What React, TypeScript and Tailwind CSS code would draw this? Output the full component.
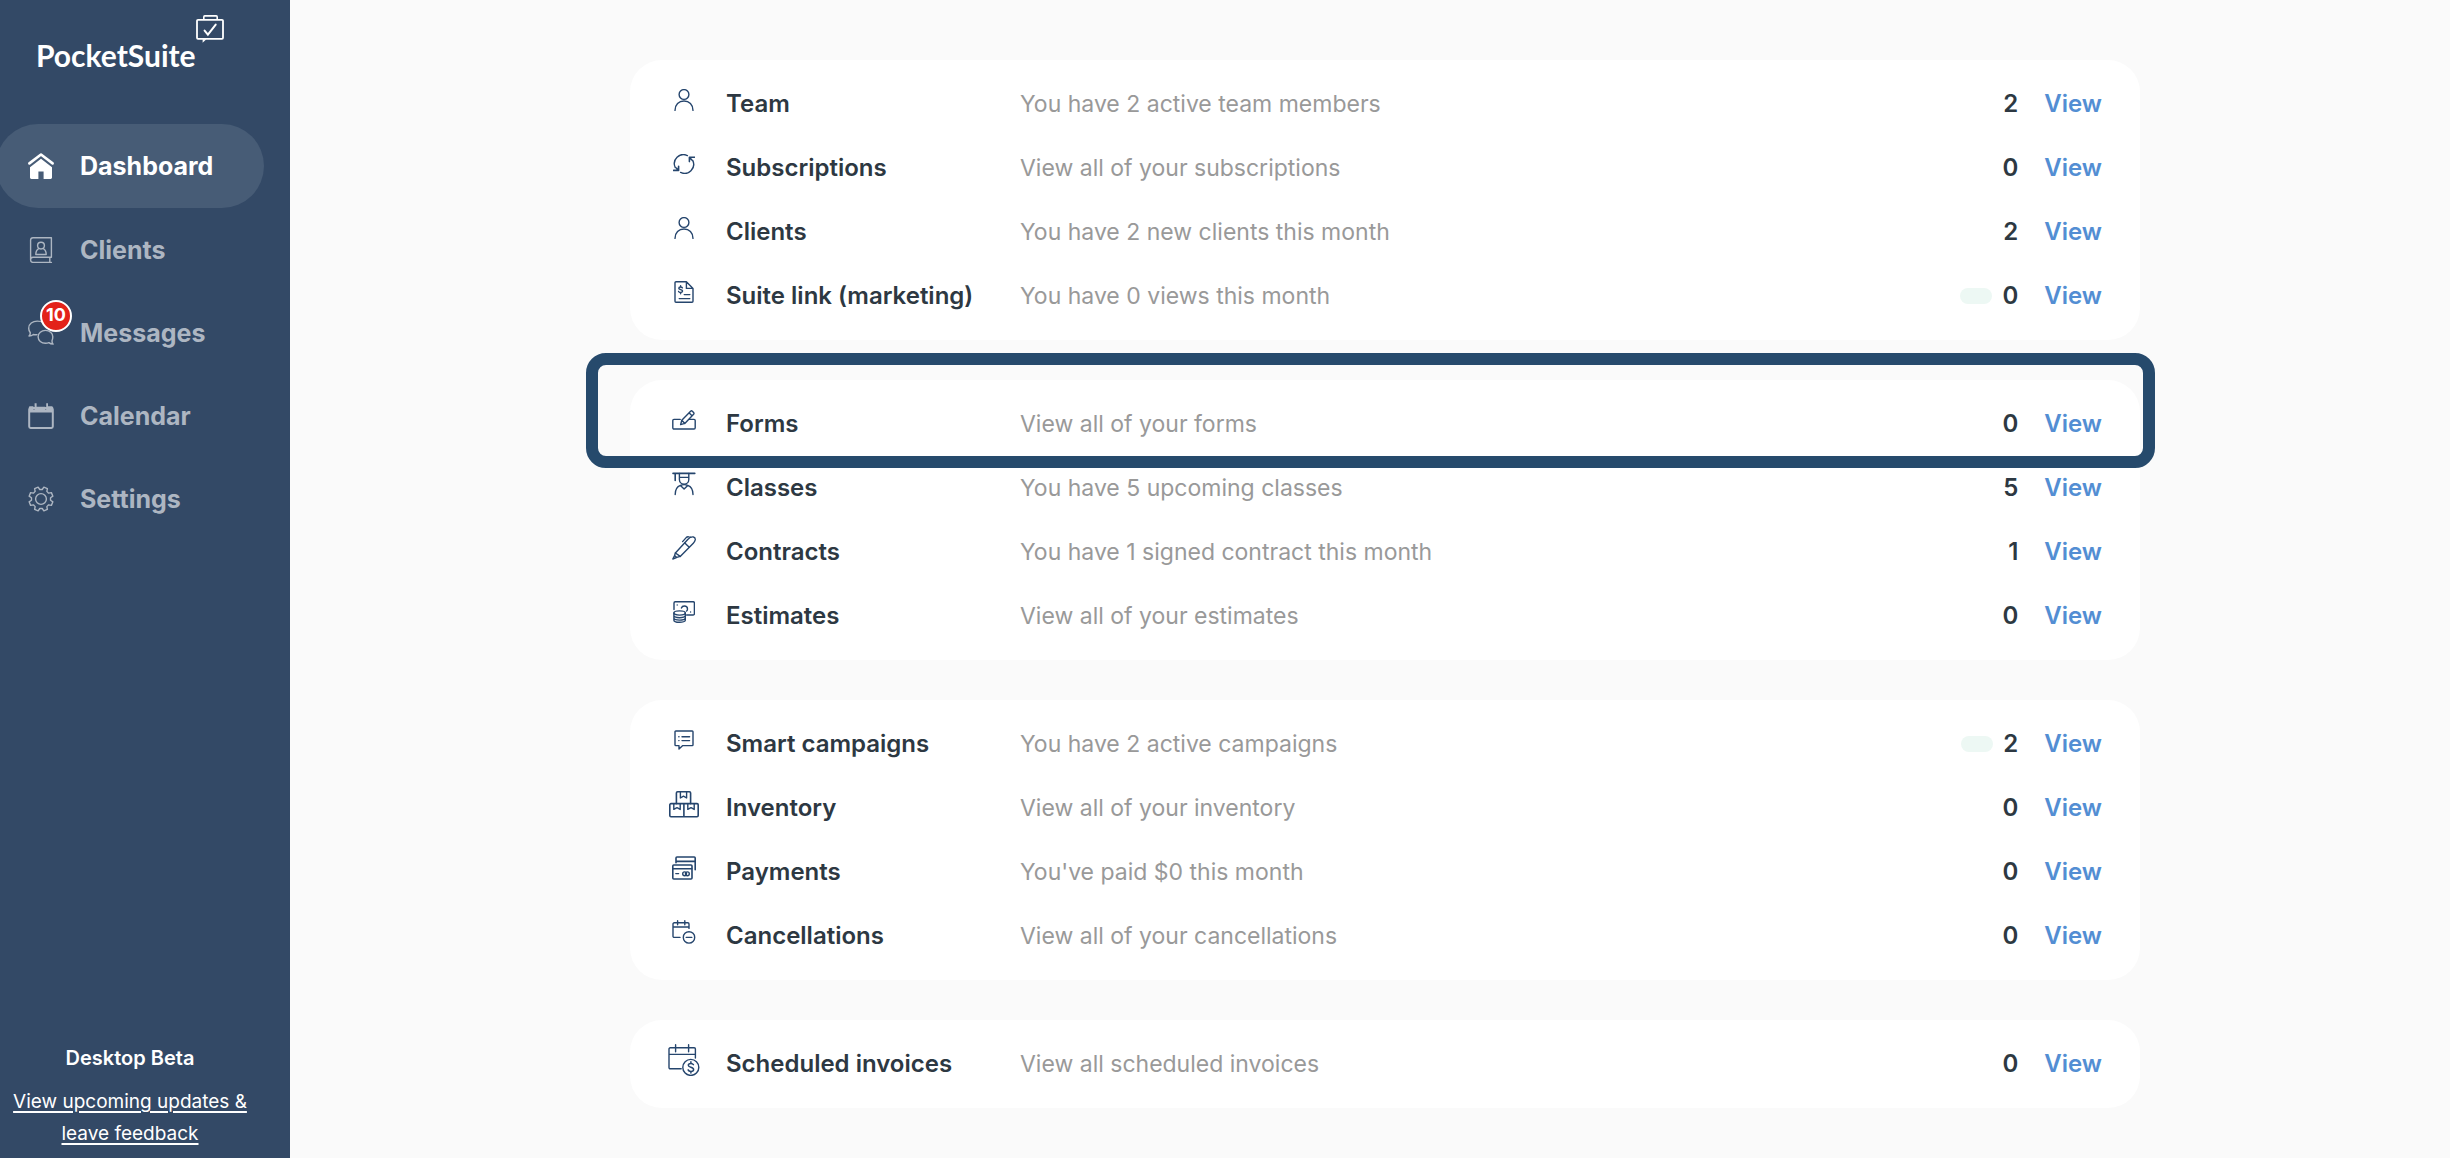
import type { ReactNode } from "react";

/* ---------- Icons ---------- */

type IconProps = { w: number; h: number; children: ReactNode };

function Icon({ w, h, children }: IconProps) {
  return (
    <svg
      width={w}
      height={h}
      viewBox={`0 0 ${w} ${h}`}
      fill="none"
      stroke="currentColor"
      strokeWidth="1.4"
      strokeLinecap="round"
      strokeLinejoin="round"
      aria-hidden="true"
      className="shrink-0"
    >
      {children}
    </svg>
  );
}

function HomeIcon() {
  return (
    <Icon w={26} h={26}>
      <path d="M1.4 10.4 13 1.500l11.6 8.900" strokeWidth="2.600" />
      <path
        d="M13 5.800 24 14.200V24.600c0 .8-.6 1.400-1.400 1.400h-7V18.400h-5.200V26h-7C2.600 26 2 25.400 2 24.600V14.200Z"
        fill="currentColor"
        stroke="none"
      />
    </Icon>
  );
}

function AddressBookIcon() {
  return (
    <Icon w={26} h={26}>
      <path d="M23.400 25.400H5A2.400 2.400 0 0 1 2.600 23V3A2.400 2.400 0 0 1 5 .7h18.400V20.200H5A2.500 2.500 0 0 0 2.600 22.600M21.800 20.400v4.800" />
      <circle cx="13" cy="8.600" r="3.400" />
      <path d="M10.800 11.600c-2 .9-3 2.600-3 5.900h10.400c0-3.300-1-5-3-5.900" />
    </Icon>
  );
}

function ChatIcon() {
  return (
    <Icon w={26} h={26}>
      <path d="M9 14.600c-1 .2-2.400.2-3.600-.1-1.200 1-2.600 1.500-4.400 1.500 1-1 1.400-2 1.300-3.300C1.200 11.300.7 9.800.7 8.200c0-4.300 3.900-7.100 8.600-7.100 5 0 8.400 2.400 8.900 6.500" />
      <path d="M24.800 16.800c0-3.800-3.200-6.400-7.300-6.400s-7.400 2.600-7.400 6.400 3.300 6.400 7.400 6.400c1.300 0 2.400-.2 3.400-.6 1.100.9 2.500 1.400 4.200 1.500-.9-1-1.300-2-1.100-3.400.5-1.100.8-2.400.8-3.900Z" />
    </Icon>
  );
}

function CalendarIcon() {
  return (
    <Icon w={26} h={26}>
      <rect x="1.200" y="5" width="23.600" height="20" rx="1.400" strokeWidth="2" />
      <path
        d="M1 9.400V4.200C1 3.600 1.500 3.200 2 3.200h3.400v3.400h1.200V.2h2v3.600h8.600v2.800h1V.2h1.800v3h3.200c1 0 1.800.5 1.800 1.200v5Z"
        fill="currentColor"
        stroke="none"
      />
    </Icon>
  );
}

// Eight teeth, with a notch straight up
const gearPath = (() => {
  const points: string[] = [];
  for (let i = 0; i < 8; i++) {
    const mid = 22.5 + i * 45;
    for (const [offset, r] of [[-15, 9.6], [-9, 12.2], [9, 12.2], [15, 9.6]]) {
      const a = ((mid + offset - 90) * Math.PI) / 180;
      points.push(`${(13 + r * Math.cos(a)).toFixed(2)} ${(13 + r * Math.sin(a)).toFixed(2)}`);
    }
  }
  return `M${points.join("L")}Z`;
})();

function GearIcon() {
  return (
    <Icon w={26} h={26}>
      <path d={gearPath} />
      <circle cx="13" cy="13" r="5.400" />
    </Icon>
  );
}

function BriefcaseCheckIcon() {
  return (
    <svg width="28" height="28" viewBox="0 0 28 28" fill="none" stroke="currentColor" aria-hidden="true">
      <rect x="1" y="4.800" width="26" height="19" rx="1" strokeWidth="1.800" />
      <path d="M7.800 4.800V1.900c0-.6.4-1 1-1h11.400c.6 0 1 .4 1 1v2.900" strokeWidth="1.600" />
      <path d="M8.600 15.600l3.300 4 7.800-10" strokeWidth="2" strokeLinecap="round" />
      <path d="M6.600 24.200v3.600l3.800-3.600Z" fill="currentColor" stroke="none" />
    </svg>
  );
}

function PersonIcon() {
  return (
    <Icon w={20} h={22}>
      <circle cx="10" cy="5.500" r="4.900" />
      <path d="M1 21.400c0-5.600 3.800-9.400 9-9.400s9 3.800 9 9.400" />
    </Icon>
  );
}

function RefreshIcon() {
  return (
    <Icon w={22} h={20}>
      <path d="M2.300 13.600A9 9 0 0 1 14.400 1.600" />
      <path d="M19.700 6.400A9 9 0 0 1 7.600 18.400" />
      <path d="M21.400 3.200h-5v4.400M16.600 3.400l2 2.400" strokeWidth="1.600" />
      <path d="M.6 16.400h5V12.200M5.400 16.400l-2-2.400" strokeWidth="1.600" />
    </Icon>
  );
}

function InvoiceIcon() {
  return (
    <Icon w={20} h={22}>
      <path d="M12.400.8H2A1 1 0 0 0 1 1.800v18.400a1 1 0 0 0 1 1h16a1 1 0 0 0 1-1V7.400L12.400.8Zm0 0v6.600H19" />
      <path d="M10.200 13.600h5.600M5.200 17.600h10.600" />
      <path d="M8.400 6.800C8 6.200 7.400 6 6.600 6 5.400 6 4.800 6.600 4.800 7.300c0 1.700 3.800.9 3.800 2.800 0 .8-.8 1.400-2 1.400-.9 0-1.700-.3-2-1M6.600 4.800V6M6.600 11.500v1.300" />
    </Icon>
  );
}

function FormIcon() {
  return (
    <Icon w={24} h={20}>
      <path d="M8.200 9.400H2A1.200 1.200 0 0 0 .8 10.600v7.200A1.200 1.200 0 0 0 2 19h20a1.200 1.200 0 0 0 1.200-1.200v-7.200A1.200 1.200 0 0 0 22 9.400h-4.400" />
      <path d="M8.600 14.600l1.200-4.400L18.600 1.200c.6-.5 1.200-.5 1.700 0l1.300 1.300c.5.5.5 1.100 0 1.700l-8.800 9.200-4.200 1.200ZM17 2.800l3 3M9.800 10.200l3 3.200" />
    </Icon>
  );
}

function GraduateIcon() {
  return (
    <Icon w={24} h={24}>
      <path d="M1 1.400h21.800M3.200 1.400v7" strokeWidth="1.600" />
      <path d="M7.400 1.400v6.100a4.700 4.700 0 0 0 9.400 0V1.400M7.400 5.400h9.400" />
      <path d="M3.200 22.600c0-4.800 1.800-8 5.200-9.200l3.700 3.700 3.700-3.700c3.400 1.200 5.200 4.400 5.200 9.200M8.400 13.400c2.200-.9 5.200-.9 7.400 0" />
    </Icon>
  );
}

function PenIcon() {
  return (
    <Icon w={24} h={24}>
      <path d="M3.400 17 16 3.200c1.600-1.800 3.200-2.600 5.400-2.200 1.400.3 2 1.500 1.800 2.900-.2 1.200-.8 2.200-1.900 3.300L8.200 20.400Z" />
      <path d="M3.400 17l-.8 2.400 2.200 2L8.200 20.400M2.600 19.600.8 23l3.600-1.400" />
      <path d="M10.600 5.600l3.800-4.200c.7-.6 1.400-.7 2.400-.5l2 .3M12.800 7l4.200 4" />
    </Icon>
  );
}

function EstimateIcon() {
  return (
    <Icon w={22} h={22}>
      <path d="M1 8.600V2A1.200 1.200 0 0 1 2.200.8h18A1.200 1.200 0 0 1 21.400 2v10.800a1.200 1.200 0 0 1-1.200 1.200h-6.600" />
      <ellipse cx="6.600" cy="12" rx="5.700" ry="2.100" />
      <path d="M.9 12v7.200c0 1.200 2.600 2.100 5.700 2.100s5.700-.9 5.700-2.100V12M.9 14.600c0 1.200 2.600 2.100 5.700 2.100s5.700-.9 5.700-2.100M.9 17c0 1.200 2.600 2.100 5.700 2.100s5.700-.9 5.700-2.100" />
      <path d="M8.400 7c.5-1.400 1.600-2 2.900-2 2 0 3.200 1.200 3.200 2.900 0 .8-.3 1.600-.9 2.100M4.200 4v.1M17.600 11v.1" />
    </Icon>
  );
}

function CampaignIcon() {
  return (
    <Icon w={20} h={20}>
      <path d="M1.800 1h16.400a.8.8 0 0 1 .8.800v13a.8.8 0 0 1-.8.800H8.800L5 19v-3.400H1.800a.8.8 0 0 1-.8-.8v-13A.8.8 0 0 1 1.800 1Z" />
      <path d="M8 6.800h7.600M8 10.600h7.600M4.800 6.800h.2M4.800 10.600h.2" />
    </Icon>
  );
}

function BoxesIcon() {
  return (
    <Icon w={30} h={27}>
      <path d="M7.400 12.600V2a1.200 1.200 0 0 1 1.200-1.200h11.800A1.200 1.200 0 0 1 21.600 2v10.600" strokeWidth="1.600" />
      <path d="M14.900 12.600v13M2 12.600h26a1.200 1.200 0 0 1 1.200 1.200v10.800a1.200 1.200 0 0 1-1.200 1.200H2a1.200 1.200 0 0 1-1.200-1.200V13.800A1.200 1.200 0 0 1 2 12.600Z" strokeWidth="1.600" />
      <path d="M11.400 1v6l3.100-1.800L17.600 7V1M4.800 12.800v5.600l3.200-1.800 3.200 1.800v-5.600M18.800 12.800v5.600l3.200-1.800 3.200 1.800v-5.600" />
    </Icon>
  );
}

function CardsIcon() {
  return (
    <Icon w={24} h={24}>
      <path d="M4 6.800V2a1 1 0 0 1 1-1h17.200a1 1 0 0 1 1 1v11.800M4.200 5.400h18.800" strokeWidth="1.600" />
      <rect x=".8" y="9" width="19.200" height="14" rx="1" strokeWidth="1.600" />
      <path d="M1 12.800h18.800M3.800 17.600h2.800" />
      <circle cx="12.600" cy="17.800" r="1.900" />
      <circle cx="15.400" cy="17.800" r="1.900" />
    </Icon>
  );
}

function CalendarMinusIcon() {
  return (
    <Icon w={24} h={24}>
      <path d="M8 17.400H2.200A1.200 1.200 0 0 1 1 16.200V4a1.200 1.200 0 0 1 1.200-1.200h13.600A1.200 1.200 0 0 1 17 4v4.400M1 7h16M5.600.8v4M12.800.8v4" />
      <circle cx="17" cy="17.400" r="5.700" />
      <path d="M14.200 17.400h5.600" />
    </Icon>
  );
}

function CalendarDollarIcon() {
  return (
    <Icon w={32} h={32}>
      <path d="M13.200 24.800H2.200A1.200 1.200 0 0 1 1 23.600V5A1.200 1.200 0 0 1 2.200 3.800h24A1.200 1.200 0 0 1 27.400 5v9M1 10.400h26.400M7.600.8v7M20.600.8v7" />
      <circle cx="22.800" cy="23.400" r="8" />
      <path d="M25.400 20.600c-.5-.8-1.400-1.200-2.500-1.200-1.600 0-2.600.8-2.600 1.900 0 2.600 5.300 1.300 5.300 4.100 0 1.200-1.100 2-2.700 2-1.300 0-2.400-.5-2.800-1.500M22.900 17.800v1.600M22.900 27.400V29" strokeWidth="1.500" />
    </Icon>
  );
}

/* ---------- Data ---------- */

const navItems = [
  { label: "Dashboard", icon: HomeIcon, active: true },
  { label: "Clients", icon: AddressBookIcon },
  { label: "Messages", icon: ChatIcon, badge: 10 },
  { label: "Calendar", icon: CalendarIcon },
  { label: "Settings", icon: GearIcon },
];

type Item = {
  label: string;
  text: string;
  count: number;
  icon: () => ReactNode;
  pill?: boolean;
  highlighted?: boolean;
};

const groups: Item[][] = [
  [
    { label: "Team", text: "You have 2 active team members", count: 2, icon: PersonIcon },
    { label: "Subscriptions", text: "View all of your subscriptions", count: 0, icon: RefreshIcon },
    { label: "Clients", text: "You have 2 new clients this month", count: 2, icon: PersonIcon },
    { label: "Suite link (marketing)", text: "You have 0 views this month", count: 0, icon: InvoiceIcon, pill: true },
  ],
  [
    { label: "Forms", text: "View all of your forms", count: 0, icon: FormIcon, highlighted: true },
    { label: "Classes", text: "You have 5 upcoming classes", count: 5, icon: GraduateIcon },
    { label: "Contracts", text: "You have 1 signed contract this month", count: 1, icon: PenIcon },
    { label: "Estimates", text: "View all of your estimates", count: 0, icon: EstimateIcon },
  ],
  [
    { label: "Smart campaigns", text: "You have 2 active campaigns", count: 2, icon: CampaignIcon, pill: true },
    { label: "Inventory", text: "View all of your inventory", count: 0, icon: BoxesIcon },
    { label: "Payments", text: "You've paid $0 this month", count: 0, icon: CardsIcon },
    { label: "Cancellations", text: "View all of your cancellations", count: 0, icon: CalendarMinusIcon },
  ],
  [{ label: "Scheduled invoices", text: "View all scheduled invoices", count: 0, icon: CalendarDollarIcon }],
];

/* ---------- Layout ---------- */

function Sidebar() {
  return (
    <aside className="w-[290px] shrink-0 flex flex-col bg-[#334966] text-white">
      {/* Brand */}
      <a href="#" className="h-[124px] pl-9 pt-[15px] flex items-start">
        <span className="pt-5 font-['Lato',sans-serif] font-bold text-[30px] leading-10">PocketSuite</span>
        <BriefcaseCheckIcon />
      </a>

      <nav className="-ml-1 pr-[26px] flex flex-col">
        {navItems.map(({ label, icon: NavIcon, active, badge }) => (
          <a
            key={label}
            href="#"
            className={
              active
                ? "h-[84px] pl-8 flex items-center gap-[26px] rounded-full bg-[#475c76] text-white"
                : "h-[83px] pl-8 flex items-center gap-[26px] rounded-full text-[#adb6c2]"
            }
          >
            <span className="relative">
              <NavIcon />
              {badge && (
                <span className="absolute -top-5 left-3 size-8 rounded-full border-2 border-white bg-[#e32219] text-white text-lg leading-[26px] font-bold text-center">
                  {badge}
                </span>
              )}
            </span>
            <span className="pt-0.5 text-[25px] font-bold">{label}</span>
          </a>
        ))}
      </nav>

      <div className="mt-auto pr-[30px] pb-2 text-center text-[19px] leading-8">
        <p className="mb-3 text-[20px] leading-8 font-semibold">Desktop Beta</p>
        <a href="#" className="block underline decoration-2 underline-offset-[3px]">
          View upcoming updates & leave feedback
        </a>
      </div>
    </aside>
  );
}

function Row({ label, text, count, icon: RowIcon, pill, highlighted }: Item) {
  return (
    <li className="relative h-16 pr-[38px] grid grid-cols-[96px_294px_1fr_auto] items-center">
      <span className="pl-3 pb-2 flex justify-center text-[#25456d]">
        <RowIcon />
      </span>
      <span className="text-2xl font-semibold text-[#2d3842]">{label}</span>
      <span className="text-[23px] text-[#999999]">{text}</span>
      <span className="flex items-center text-2xl font-semibold">
        {pill && <span className="w-8 h-4 mr-2.5 rounded-full bg-[#edf8f4]" />}
        <span className="text-[#2d3842]">{count}</span>
        <a href="#" className="ml-[26px] text-[#538ed3]">
          View
        </a>
      </span>
      {highlighted && (
        <span className="absolute -top-[39px] -bottom-3 -left-11 -right-[15px] z-10 rounded-[20px] border-12 border-[#264a6c] pointer-events-none" />
      )}
    </li>
  );
}

export default function App() {
  return (
    <div className="min-h-screen flex bg-[#fafafa] font-['Inter',sans-serif]">
      <Sidebar />
      <main className="flex-1 pl-[340px] pr-[310px] pt-[60px] flex flex-col gap-10">
        {groups.map((items) => (
          <ul key={items[0].label} className="py-3 rounded-[32px] bg-white">
            {items.map((item) => (
              <Row key={item.label} {...item} />
            ))}
          </ul>
        ))}
      </main>
    </div>
  );
}
